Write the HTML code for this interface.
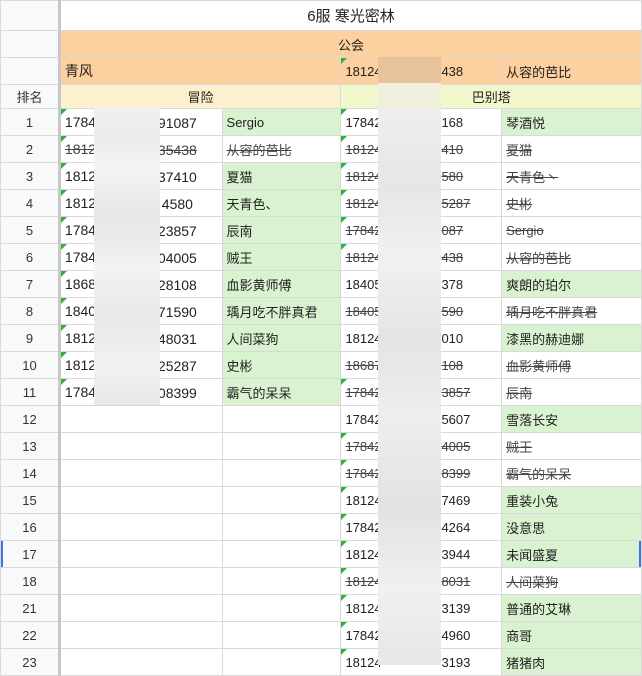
<!DOCTYPE html>
<html><head><meta charset="utf-8"><style>
*{margin:0;padding:0;box-sizing:border-box}
body{width:642px;height:674px;overflow:hidden;background:#fff;font-family:"Liberation Sans","Noto Sans CJK SC",sans-serif;font-size:13px;color:#222;position:relative}
table{border-collapse:collapse;table-layout:fixed;position:absolute;left:0;top:0}
td{border:1px solid #d9d9d9;height:27px;padding:0 0 0 4px;white-space:nowrap;overflow:hidden;position:relative;vertical-align:middle}
td.h{background:#f8f9fa;text-align:center;padding:0;color:#333;border-right:3px solid #c8c8c8}
.c{text-align:center;padding:0}
.o{background:#fcd09f}
.cr{background:#fdf0cc}
.yg{background:#f2f7cc}
.g{background:#d9f2d0}
.s{text-decoration:line-through;color:#444}
.t{position:absolute;top:6px}
.tr::before{content:"";position:absolute;left:0;top:0;border-top:6px solid #2fb13d;border-right:6px solid transparent}
.bl{position:absolute}
</style></head><body>
<table>
<colgroup><col style="width:59px"><col style="width:163px"><col style="width:119px"><col style="width:161px"><col style="width:140px"></colgroup>
<tr style="height:30px"><td class="h" style="height:30px"></td><td colspan="4" class="c" style="font-size:15px;height:30px">6服 寒光密林</td></tr>
<tr><td class="h"></td><td colspan="4" class="c o">公会</td></tr>
<tr><td class="h"></td><td colspan="2" class="o" style="font-size:14px">青风</td><td class="o tr">18124<span class="t" style="left:100px">438</span></td><td class="o">从容的芭比</td></tr>
<tr style="height:24px"><td class="h" style="height:24px">排名</td><td colspan="2" class="c cr" style="height:24px">冒险</td><td colspan="2" class="c yg" style="height:24px">巴别塔</td></tr>
<tr><td class="h">1</td><td class="tr" style="font-size:14px">1784<span class="t" style="left:97px">91087</span></td><td class="g">Sergio</td><td class="tr">17842<span class="t" style="left:100px">168</span></td><td class="g">琴酒悦</td></tr>
<tr><td class="h">2</td><td class="tr s" style="font-size:14px">1812<span class="t s" style="left:97px">35438</span></td><td class="s">从容的芭比</td><td class="tr s">18124<span class="t s" style="left:100px">410</span></td><td class="s">夏猫</td></tr>
<tr><td class="h">3</td><td class="tr" style="font-size:14px">1812<span class="t" style="left:97px">37410</span></td><td class="g">夏猫</td><td class="tr s">18124<span class="t s" style="left:100px">580</span></td><td class="s">天青色丶</td></tr>
<tr><td class="h">4</td><td class="tr" style="font-size:14px">1812<span class="t" style="left:97px">&nbsp;4580</span></td><td class="g">天青色、</td><td class="tr s">18124<span class="t s" style="left:100px">5287</span></td><td class="s">史彬</td></tr>
<tr><td class="h">5</td><td class="tr" style="font-size:14px">1784<span class="t" style="left:97px">23857</span></td><td class="g">辰南</td><td class="tr s">17842<span class="t s" style="left:100px">087</span></td><td class="s">Sergio</td></tr>
<tr><td class="h">6</td><td class="tr" style="font-size:14px">1784<span class="t" style="left:97px">04005</span></td><td class="g">贼王</td><td class="tr s">18124<span class="t s" style="left:100px">438</span></td><td class="s">从容的芭比</td></tr>
<tr><td class="h">7</td><td class="tr" style="font-size:14px">1868<span class="t" style="left:97px">28108</span></td><td class="g">血影黄师傅</td><td>18405<span class="t" style="left:100px">378</span></td><td class="g">爽朗的珀尔</td></tr>
<tr><td class="h">8</td><td class="tr" style="font-size:14px">1840<span class="t" style="left:97px">71590</span></td><td class="g">瑀月吃不胖真君</td><td class="s">18405<span class="t s" style="left:100px">590</span></td><td class="s">瑀月吃不胖真君</td></tr>
<tr><td class="h">9</td><td class="tr" style="font-size:14px">1812<span class="t" style="left:97px">48031</span></td><td class="g">人间菜狗</td><td>18124<span class="t" style="left:100px">010</span></td><td class="g">漆黑的赫迪娜</td></tr>
<tr><td class="h">10</td><td class="tr" style="font-size:14px">1812<span class="t" style="left:97px">25287</span></td><td class="g">史彬</td><td class="s">18687<span class="t s" style="left:100px">108</span></td><td class="s">血影黄师傅</td></tr>
<tr><td class="h">11</td><td class="tr" style="font-size:14px">1784<span class="t" style="left:97px">08399</span></td><td class="g">霸气的呆呆</td><td class="tr s">17842<span class="t s" style="left:100px">3857</span></td><td class="s">辰南</td></tr>
<tr><td class="h">12</td><td></td><td></td><td>17842<span class="t" style="left:100px">5607</span></td><td class="g">雪落长安</td></tr>
<tr><td class="h">13</td><td></td><td></td><td class="tr s">17842<span class="t s" style="left:100px">4005</span></td><td class="s">贼王</td></tr>
<tr><td class="h">14</td><td></td><td></td><td class="tr s">17842<span class="t s" style="left:100px">8399</span></td><td class="s">霸气的呆呆</td></tr>
<tr><td class="h">15</td><td></td><td></td><td class="tr">18124<span class="t" style="left:100px">7469</span></td><td class="g">重装小兔</td></tr>
<tr><td class="h">16</td><td></td><td></td><td class="tr">17842<span class="t" style="left:100px">4264</span></td><td class="g">没意思</td></tr>
<tr><td class="h" style="box-shadow:inset 2px 0 0 #3b78e7">17</td><td></td><td></td><td class="tr">18124<span class="t" style="left:100px">3944</span></td><td class="g" style="box-shadow:inset -2px 0 0 #3b78e7">未闻盛夏</td></tr>
<tr><td class="h">18</td><td></td><td></td><td class="tr s">18124<span class="t s" style="left:100px">8031</span></td><td class="s">人间菜狗</td></tr>
<tr><td class="h">21</td><td></td><td></td><td class="tr">18124<span class="t" style="left:100px">3139</span></td><td class="g">普通的艾琳</td></tr>
<tr><td class="h">22</td><td></td><td></td><td class="tr">17842<span class="t" style="left:100px">4960</span></td><td class="g">商哥</td></tr>
<tr><td class="h">23</td><td></td><td></td><td class="tr">18124<span class="t" style="left:100px">3193</span></td><td class="g">猪猪肉</td></tr>
</table>
<div class="bl" style="left:94px;top:108px;width:66px;height:297px;background:linear-gradient(180deg,#f0f0f0 0,#ececec 30px,#f4f4f4 60px,#e6e6e6 110px,#f2f2f2 160px,#e9e9e9 210px,#f1f1f1 260px,#e8e8e8 297px)"></div>
<div class="bl" style="left:378px;top:57px;width:63px;height:26px;background:#e8c29a"></div>
<div class="bl" style="left:378px;top:83px;width:63px;height:25px;background:#f0efdc"></div>
<div class="bl" style="left:378px;top:108px;width:63px;height:557px;background:linear-gradient(180deg,#eeeeee 0,#e6e6e6 80px,#f1f1f1 150px,#e4e4e4 230px,#eeeeee 310px,#e2e2e2 400px,#f0f0f0 480px,#e7e7e7 557px)"></div>
</body></html>
